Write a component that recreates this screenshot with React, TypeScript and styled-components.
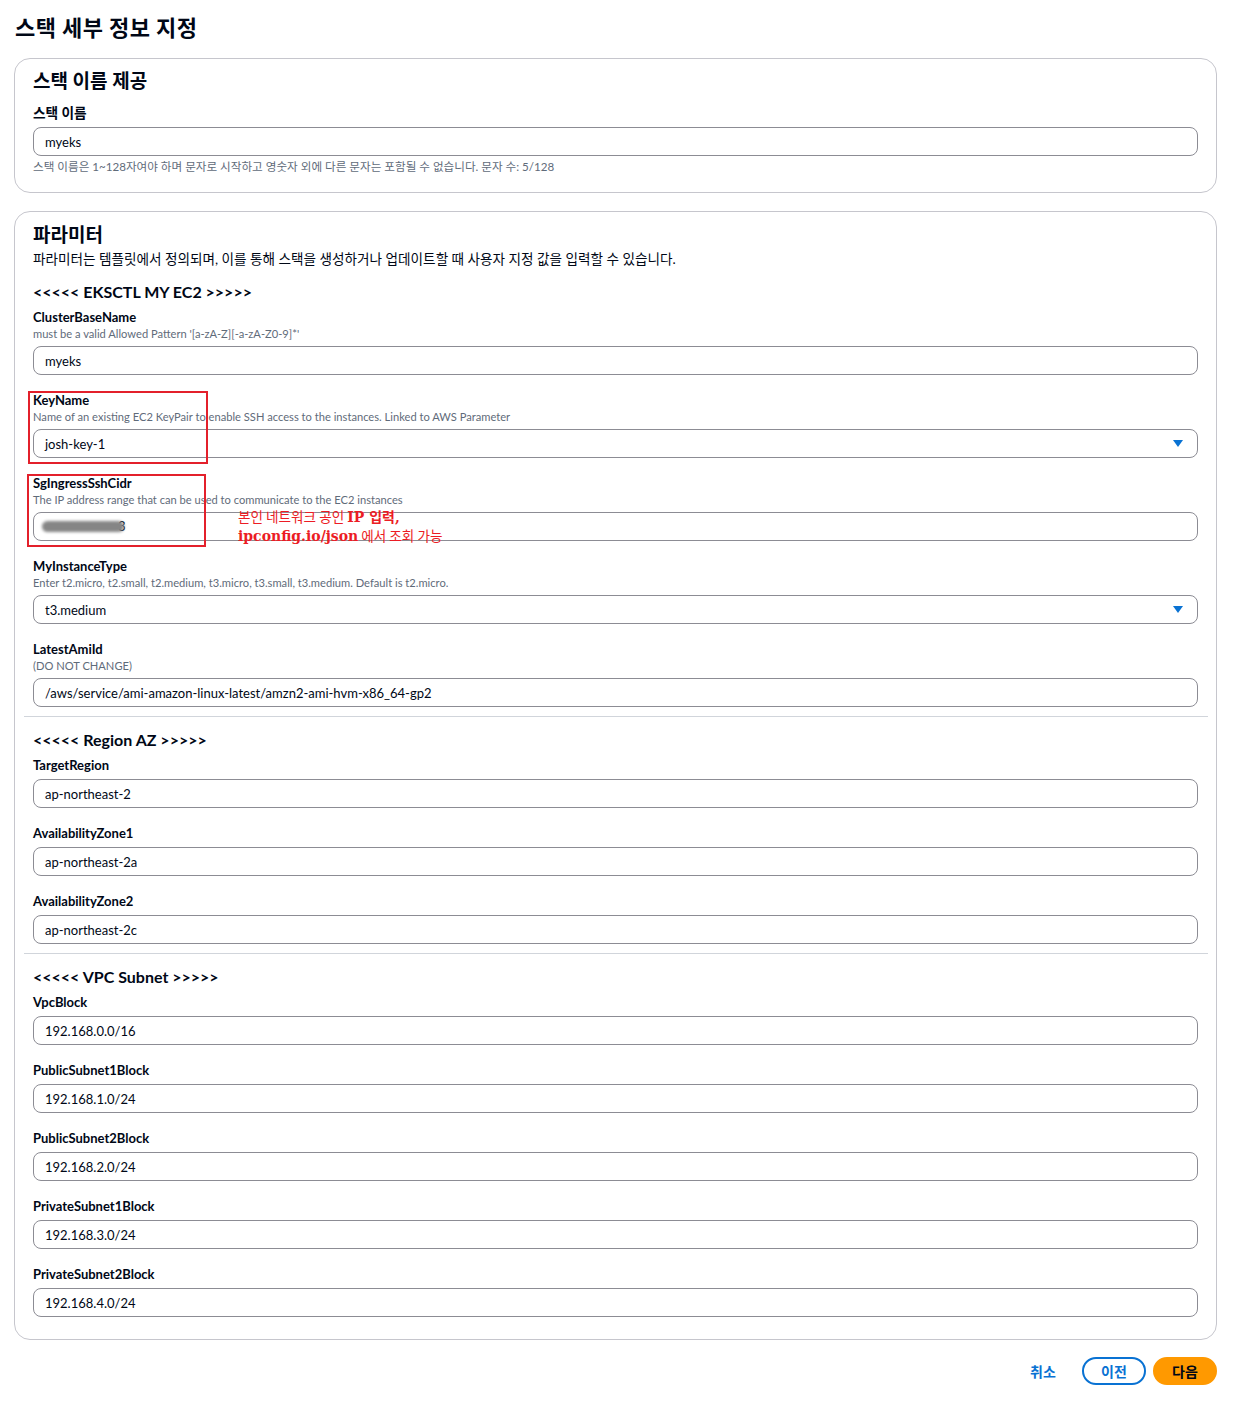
import React from "react";
import styled, { createGlobalStyle } from "styled-components";

const GlobalStyle = createGlobalStyle`
  html, body { margin: 0; padding: 0; background: #ffffff; }
  body {
    font-family: Lato, "Noto Sans CJK KR", sans-serif;
    color: #000716;
    -webkit-font-smoothing: antialiased;
  }
  * { box-sizing: border-box; }
`;

const Page = styled.div`
  display: flex;
  flex-direction: column;
  padding: 14px 23px 30px 14px;
`;

const PageTitle = styled.h1`
  margin: 0 0 16px 1px;
  font-size: 22px;
  line-height: 28px;
  font-weight: 700;
  letter-spacing: 0.4px;
  color: #000716;
`;

const Card = styled.section<{ $top?: number; $bottom?: number }>`
  border: 1px solid #c6c6cd;
  border-radius: 16px;
  padding: ${(p) => p.$top ?? 11}px 18px ${(p) => p.$bottom ?? 17}px 18px;
  display: flex;
  flex-direction: column;
  & + & { margin-top: 18px; }
`;

const CardTitle = styled.h2`
  margin: 0;
  font-size: 19px;
  line-height: 24px;
  font-weight: 700;
`;

const CardDesc = styled.p`
  margin: 3px 0 0 0;
  font-size: 13.6px;
  line-height: 18px;
  color: #000716;
`;

const Section = styled.div<{ $top: number }>`
  display: flex;
  flex-direction: column;
  margin-top: ${(p) => p.$top}px;
`;

const SectionTitle = styled.h3`
  margin: 0 0 5px 0;
  font-size: 16px;
  line-height: 22px;
  font-weight: 700;
`;

const FieldList = styled.div`
  display: flex;
  flex-direction: column;
  gap: 16px;
`;

const Field = styled.div<{ $top?: number }>`
  position: relative;
  display: flex;
  flex-direction: column;
  margin-top: ${(p) => p.$top ?? 0}px;
`;

const Label = styled.label<{ $ko?: boolean }>`
  font-size: ${(p) => (p.$ko ? 13.7 : 13)}px;
  line-height: 18px;
  font-weight: 700;
`;

const Desc = styled.div`
  font-size: 11.15px;
  line-height: 15px;
  color: #5f6b7a;
`;

const Hint = styled.div`
  margin-top: 3px;
  font-size: 11.6px;
  line-height: 16px;
  color: #5f6b7a;
`;

const InputBox = styled.div`
  position: relative;
  margin-top: 5px;
  height: 29px;
  border: 1px solid #8c8c94;
  border-radius: 8px;
  padding: 0 14px 0 11px;
  display: flex;
  align-items: center;
  justify-content: space-between;
  font-size: 13px;
  color: #000716;
`;

const Arrow = styled.span`
  width: 0;
  height: 0;
  border-left: 5px solid transparent;
  border-right: 5px solid transparent;
  border-top: 7px solid #0972d3;
`;

const Divider = styled.hr`
  margin: 9px -10px 12px -9px;
  border: none;
  border-top: 1px solid #d1d5db;
  height: 0;
`;

const Highlight = styled.div<{ $left: number; $width: number }>`
  position: absolute;
  left: ${(p) => p.$left}px;
  top: 0;
  width: ${(p) => p.$width}px;
  height: 73px;
  border: 2px solid #e3202b;
  pointer-events: none;
`;

const Note = styled.div`
  position: absolute;
  left: 205px;
  top: 33px;
  font-family: "Noto Sans CJK KR", sans-serif;
  font-size: 13.6px;
  line-height: 18px;
  color: #ec1c24;
  white-space: nowrap;
`;

const NoteStrong = styled.b`
  font-family: "DejaVu Serif", "Noto Sans CJK KR", serif;
  font-weight: 700;
  font-size: 14px;
`;

const IpValue = styled.span`
  display: inline-flex;
  align-items: center;
`;

const Blur = styled.span`
  display: inline-block;
  width: 82px;
  height: 11px;
  margin-left: -3px;
  margin-right: -6px;
  border-radius: 6px;
  background: #858585;
  filter: blur(1.5px);
  position: relative;
  z-index: 1;
`;

const Footer = styled.div`
  display: flex;
  justify-content: flex-end;
  align-items: center;
  gap: 7px;
  margin-top: 17px;
`;

const Button = styled.button<{ $variant: "link" | "normal" | "primary" }>`
  height: 28px;
  width: 64px;
  border-radius: 20px;
  font-family: inherit;
  font-size: 14px;
  font-weight: 700;
  cursor: pointer;
  border: 2px solid
    ${(p) => (p.$variant === "normal" ? "#0972d3" : p.$variant === "primary" ? "#ff9900" : "transparent")};
  background: ${(p) => (p.$variant === "primary" ? "#ff9900" : "#ffffff")};
  color: ${(p) => (p.$variant === "primary" ? "#000716" : "#0972d3")};
`;

type F = { name: string; desc?: string; value: React.ReactNode; select?: boolean };

const regionFields: F[] = [
  { name: "TargetRegion", value: "ap-northeast-2" },
  { name: "AvailabilityZone1", value: "ap-northeast-2a" },
  { name: "AvailabilityZone2", value: "ap-northeast-2c" },
];

const vpcFields: F[] = [
  { name: "VpcBlock", value: "192.168.0.0/16" },
  { name: "PublicSubnet1Block", value: "192.168.1.0/24" },
  { name: "PublicSubnet2Block", value: "192.168.2.0/24" },
  { name: "PrivateSubnet1Block", value: "192.168.3.0/24" },
  { name: "PrivateSubnet2Block", value: "192.168.4.0/24" },
];

function FieldView({ f, children }: { f: F; children?: React.ReactNode }) {
  return (
    <Field>
      <Label>{f.name}</Label>
      {f.desc && <Desc>{f.desc}</Desc>}
      <InputBox>
        <span>{f.value}</span>
        {f.select && <Arrow />}
      </InputBox>
      {children}
    </Field>
  );
}

export default function App() {
  return (
    <>
      <GlobalStyle />
      <Page>
        <PageTitle>스택 세부 정보 지정</PageTitle>

        <Card $top={10} $bottom={17}>
          <CardTitle>스택 이름 제공</CardTitle>
          <Field $top={11}>
            <Label $ko>스택 이름</Label>
            <InputBox>
              <span>myeks</span>
            </InputBox>
            <Hint>스택 이름은 1~128자여야 하며 문자로 시작하고 영숫자 외에 다른 문자는 포함될 수 없습니다. 문자 수: 5/128</Hint>
          </Field>
        </Card>

        <Card $top={11} $bottom={22}>
          <CardTitle>파라미터</CardTitle>
          <CardDesc>파라미터는 템플릿에서 정의되며, 이를 통해 스택을 생성하거나 업데이트할 때 사용자 지정 값을 입력할 수 있습니다.</CardDesc>

          <Section $top={13}>
            <SectionTitle>&lt;&lt;&lt;&lt;&lt; EKSCTL MY EC2 &gt;&gt;&gt;&gt;&gt;</SectionTitle>
            <FieldList>
              <FieldView
                f={{
                  name: "ClusterBaseName",
                  desc: "must be a valid Allowed Pattern '[a-zA-Z][-a-zA-Z0-9]*'",
                  value: "myeks",
                }}
              />
              <FieldView
                f={{
                  name: "KeyName",
                  desc: "Name of an existing EC2 KeyPair to enable SSH access to the instances. Linked to AWS Parameter",
                  value: "josh-key-1",
                  select: true,
                }}
              >
                <Highlight $left={-5} $width={180} />
              </FieldView>
              <FieldView
                f={{
                  name: "SgIngressSshCidr",
                  desc: "The IP address range that can be used to communicate to the EC2 instances",
                  value: (
                    <IpValue>
                      <Blur />3
                    </IpValue>
                  ),
                }}
              >
                <Highlight $left={-6} $width={179} />
                <Note>
                  본인 네트워크 공인 <NoteStrong>IP 입력,</NoteStrong>
                  <br />
                  <NoteStrong>ipconfig.io/json</NoteStrong> 에서 조회 가능
                </Note>
              </FieldView>
              <FieldView
                f={{
                  name: "MyInstanceType",
                  desc: "Enter t2.micro, t2.small, t2.medium, t3.micro, t3.small, t3.medium. Default is t2.micro.",
                  value: "t3.medium",
                  select: true,
                }}
              />
              <FieldView
                f={{
                  name: "LatestAmiId",
                  desc: "(DO NOT CHANGE)",
                  value: "/aws/service/ami-amazon-linux-latest/amzn2-ami-hvm-x86_64-gp2",
                }}
              />
            </FieldList>
          </Section>

          <Divider />

          <Section $top={0}>
            <SectionTitle>&lt;&lt;&lt;&lt;&lt; Region AZ &gt;&gt;&gt;&gt;&gt;</SectionTitle>
            <FieldList>
              {regionFields.map((f) => (
                <FieldView key={f.name} f={f} />
              ))}
            </FieldList>
          </Section>

          <Divider />

          <Section $top={0}>
            <SectionTitle>&lt;&lt;&lt;&lt;&lt; VPC Subnet &gt;&gt;&gt;&gt;&gt;</SectionTitle>
            <FieldList>
              {vpcFields.map((f) => (
                <FieldView key={f.name} f={f} />
              ))}
            </FieldList>
          </Section>
        </Card>

        <Footer>
          <Button $variant="link">취소</Button>
          <Button $variant="normal">이전</Button>
          <Button $variant="primary">다음</Button>
        </Footer>
      </Page>
    </>
  );
}
